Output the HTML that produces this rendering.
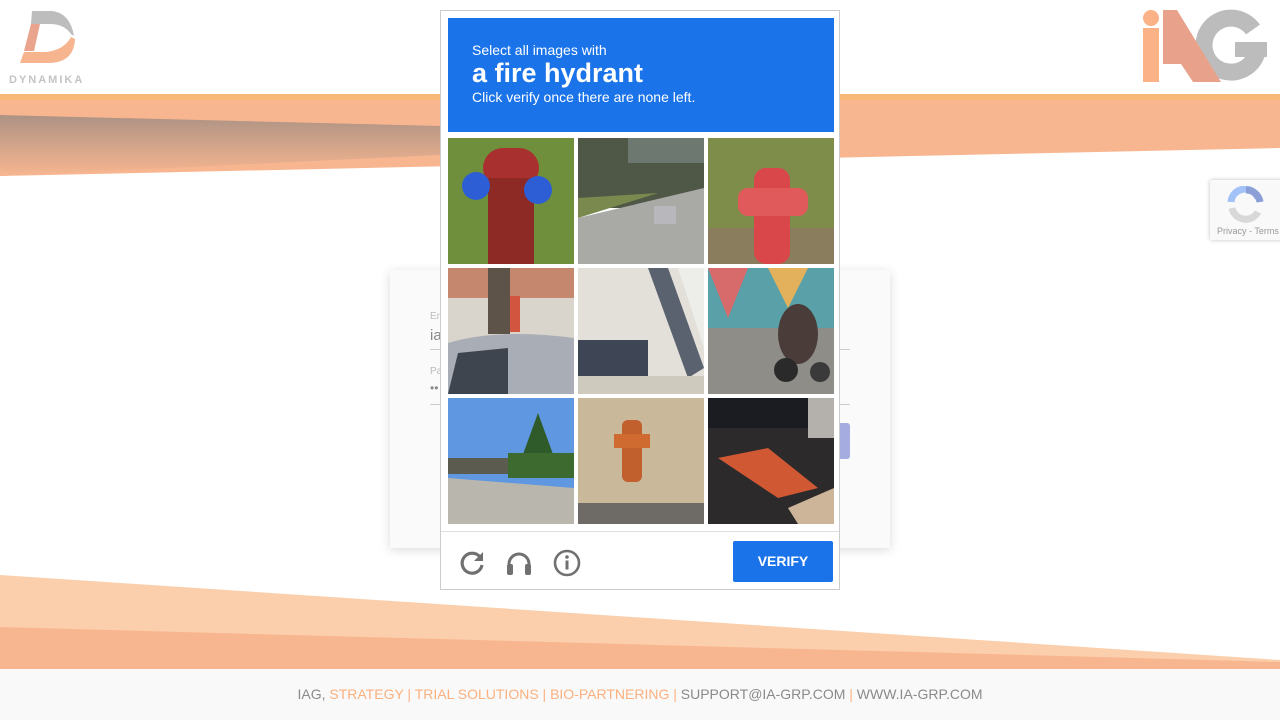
<!DOCTYPE html>
<html><head><meta charset="utf-8"><style>
*{margin:0;padding:0;box-sizing:border-box}
body{width:1280px;height:720px;overflow:hidden;background:#fff;font-family:"Liberation Sans",sans-serif;position:relative}
.abs{position:absolute}
.tile{position:absolute;width:126px;height:126px;overflow:hidden}
.tile svg{display:block}
</style></head><body>
<svg class="abs" style="left:0;top:0" width="1280" height="720">
<defs><linearGradient id="gg" x1="0" y1="0" x2="0" y2="1"><stop offset="0" stop-color="#ad9284"/><stop offset="1" stop-color="#f7b690"/></linearGradient></defs>
<rect x="0" y="94" width="1280" height="6" fill="#f8b878"/>
<polygon points="0,100 1280,100 1280,148 0,176" fill="#f8b690"/>
<polygon points="0,115 440,126 440,155 0,176" fill="url(#gg)"/>
<polygon points="0,575 1280,660 1280,669 0,669" fill="#fbcfab"/>
<polygon points="0,627 1280,662 1280,669 0,669" fill="#f8b690"/>
<rect x="0" y="669" width="1280" height="51" fill="#f9f9f9"/>
<!-- Dynamika -->
<path d="M32 11 L52 11 Q70 13 74 36 L71 34 Q64 24 50 24 L31 24 Z" fill="#bdbdbd"/>
<polygon points="31,24 40,24 34,51 24,51" fill="#eaa48e"/>
<path d="M24 52 L46 52 Q64 50 71 37 L75 39 Q74 62 50 63 L20 63 Z" fill="#f6b58f"/>
<text x="9" y="83" font-size="11" fill="#c4c4c4" font-weight="bold" letter-spacing="2" font-family="Liberation Sans">DYNAMIKA</text>
<!-- IAG -->
<path d="M1253 29.5 A27 27 0 1 0 1258 45" fill="none" stroke="#bcbcbc" stroke-width="17"/>
<rect x="1235" y="42" width="32" height="15" fill="#bcbcbc"/>
<circle cx="1151" cy="18" r="8" fill="#fbb286"/>
<rect x="1143" y="28" width="16" height="54" fill="#fbb286"/>
<polygon points="1163,10 1177,10 1221,82 1193,82 1181,64 1163,64" fill="#e8a28c"/>
</svg>
<!-- login card behind -->
<div class="abs" style="left:390px;top:270px;width:500px;height:278px;background:#fafafa;box-shadow:0 2px 10px rgba(0,0,0,.15)"></div>
<div class="abs" style="left:430px;top:311px;font-size:10px;color:#bbb">Em</div>
<div class="abs" style="left:430px;top:327px;font-size:15px;color:#888">ia</div>
<div class="abs" style="left:430px;top:349px;width:420px;height:1px;background:#ccc"></div>
<div class="abs" style="left:430px;top:366px;font-size:10px;color:#bbb">Pa</div>
<div class="abs" style="left:430px;top:381px;font-size:12px;color:#888">••</div>
<div class="abs" style="left:430px;top:404px;width:420px;height:1px;background:#ccc"></div>
<div class="abs" style="left:800px;top:423px;width:50px;height:36px;background:#a5acdf;border-radius:3px"></div>
<!-- captcha -->
<div class="abs" style="left:440px;top:10px;width:400px;height:580px;background:#fff;border:1px solid #ccc"></div>
<div class="abs" style="left:448px;top:18px;width:386px;height:114px;background:#1a73e8;color:#fff;padding:24px 0 0 24px;font-family:'Liberation Sans',sans-serif">
<div style="font-size:14px;line-height:16px">Select all images with</div>
<div style="font-size:27px;font-weight:bold;line-height:30px">a fire hydrant</div>
<div style="font-size:14px;line-height:18px">Click verify once there are none left.</div>
</div>
<div class="tile" style="left:448px;top:138px"><svg width="126" height="126"><rect width="126" height="126" fill="#6f8f3c"/><rect x="35" y="10" width="56" height="40" rx="20" fill="#a8302e"/><rect x="40" y="40" width="46" height="86" fill="#8e2a26"/><circle cx="28" cy="48" r="14" fill="#2e5ed6"/><circle cx="90" cy="52" r="14" fill="#2e5ed6"/></svg></div>
<div class="tile" style="left:578px;top:138px"><svg width="126" height="126"><rect width="126" height="70" fill="#4f5747"/><rect x="50" y="0" width="76" height="25" fill="#6d7870"/><polygon points="0,126 0,80 126,50 126,126" fill="#a9a9a6"/><polygon points="0,80 0,60 80,55" fill="#7a8a4f"/><rect x="76" y="68" width="22" height="18" fill="#b8b8bc"/></svg></div>
<div class="tile" style="left:708px;top:138px"><svg width="126" height="126"><rect width="126" height="126" fill="#7f8d4a"/><rect x="0" y="90" width="126" height="36" fill="#8a7d5e"/><rect x="46" y="30" width="36" height="96" rx="12" fill="#d9474a"/><rect x="30" y="50" width="70" height="28" rx="10" fill="#e05a5c"/></svg></div>
<div class="tile" style="left:448px;top:268px"><svg width="126" height="126"><rect width="126" height="126" fill="#d9d4cc"/><rect x="0" y="0" width="126" height="30" fill="#c6876f"/><rect x="40" y="0" width="22" height="66" fill="#5d5348"/><rect x="62" y="28" width="10" height="36" fill="#d2553f"/><path d="M0 75 Q50 60 126 70 L126 126 L0 126Z" fill="#a8adb6"/><path d="M10 85 L60 80 L60 126 L0 126Z" fill="#3f454f"/></svg></div>
<div class="tile" style="left:578px;top:268px"><svg width="126" height="126"><rect width="126" height="126" fill="#ededea"/><polygon points="0,0 100,0 126,80 126,126 0,126" fill="#e2e0d8"/><polygon points="70,0 90,0 126,100 110,110" fill="#5a6270"/><rect x="0" y="72" width="70" height="38" fill="#3e4655"/><rect x="0" y="108" width="126" height="18" fill="#cfcabe"/></svg></div>
<div class="tile" style="left:708px;top:268px"><svg width="126" height="126"><rect width="126" height="60" fill="#5aa0a8"/><polygon points="0,0 40,0 20,50" fill="#d76a6a"/><polygon points="60,0 100,0 80,40" fill="#e3b05c"/><rect x="0" y="60" width="126" height="66" fill="#8e8d88"/><ellipse cx="90" cy="66" rx="20" ry="30" fill="#4a3c39"/><circle cx="78" cy="102" r="12" fill="#2b2a2a"/><circle cx="112" cy="104" r="10" fill="#3a3a3a"/></svg></div>
<div class="tile" style="left:448px;top:398px"><svg width="126" height="126"><rect width="126" height="126" fill="#5f98e0"/><rect x="0" y="60" width="126" height="16" fill="#5b5b4f"/><polygon points="90,15 110,70 70,70" fill="#2f5a2a"/><rect x="60" y="55" width="66" height="25" fill="#3d6b2f"/><polygon points="0,126 0,80 126,90 126,126" fill="#b9b6ae"/></svg></div>
<div class="tile" style="left:578px;top:398px"><svg width="126" height="126"><rect width="126" height="126" fill="#c9b99a"/><rect x="0" y="105" width="126" height="21" fill="#6e6a65"/><rect x="44" y="22" width="20" height="62" rx="6" fill="#c1602c"/><rect x="36" y="36" width="36" height="14" fill="#cf6a30"/></svg></div>
<div class="tile" style="left:708px;top:398px"><svg width="126" height="126"><rect width="126" height="126" fill="#2d2a2c"/><rect x="0" y="0" width="126" height="30" fill="#1b1b22"/><polygon points="10,60 70,100 110,90 60,50" fill="#d05934"/><polygon points="80,110 126,90 126,126 90,126" fill="#cdb59a"/><rect x="100" y="0" width="26" height="40" fill="#b4b0ab"/></svg></div>
<div class="abs" style="left:441px;top:531px;width:398px;height:1px;background:#dfdfdf"></div>
<svg class="abs" style="left:456px;top:546px" width="130" height="34">
<path d="M24 11 A10 10 0 1 0 26 19" fill="none" stroke="#707070" stroke-width="3.2"/>
<polygon points="27,6 27,15 18,15" fill="#707070"/>
<path d="M53 28 L53 18 A10 10 0 0 1 73 18 L73 28" fill="none" stroke="#707070" stroke-width="3"/>
<rect x="51" y="18" width="6" height="11" rx="2" fill="#707070"/><rect x="69" y="18" width="6" height="11" rx="2" fill="#707070"/>
<circle cx="111" cy="17" r="12" fill="none" stroke="#707070" stroke-width="2.6"/>
<circle cx="111" cy="11" r="1.8" fill="#707070"/><rect x="109.5" y="14.5" width="3" height="9" fill="#707070"/>
</svg>
<div class="abs" style="left:733px;top:541px;width:100px;height:41px;background:#1a73e8;border-radius:2px;color:#fff;font-weight:bold;font-size:14px;text-align:center;line-height:41px">VERIFY</div>
<div class="abs" style="left:1210px;top:180px;width:74px;height:60px;background:#f9f9f9;box-shadow:0 0 4px rgba(0,0,0,.25);border-radius:2px"></div>
<svg class="abs" style="left:1226px;top:186px" width="38" height="38">
<path d="M5 16 A14 14 0 0 1 32 12" fill="none" stroke="#a3c2f7" stroke-width="7"/>
<path d="M20 4 A14 14 0 0 1 34 16" fill="none" stroke="#8b9fd6" stroke-width="7"/>
<path d="M6 22 A14 14 0 0 0 32 26" fill="none" stroke="#d8d8d8" stroke-width="7"/>
</svg>
<div class="abs" style="left:1217px;top:226px;font-size:9px;color:#999">Privacy - Terms</div>
<div class="abs" style="left:0;top:686px;width:1280px;text-align:center;font-size:14px;color:#8a8a8a">IAG, <span style="color:#fbb07f">STRATEGY | TRIAL SOLUTIONS | BIO-PARTNERING |</span> SUPPORT@IA-GRP.COM <span style="color:#fbb07f">|</span> WWW.IA-GRP.COM</div>
</body></html>
